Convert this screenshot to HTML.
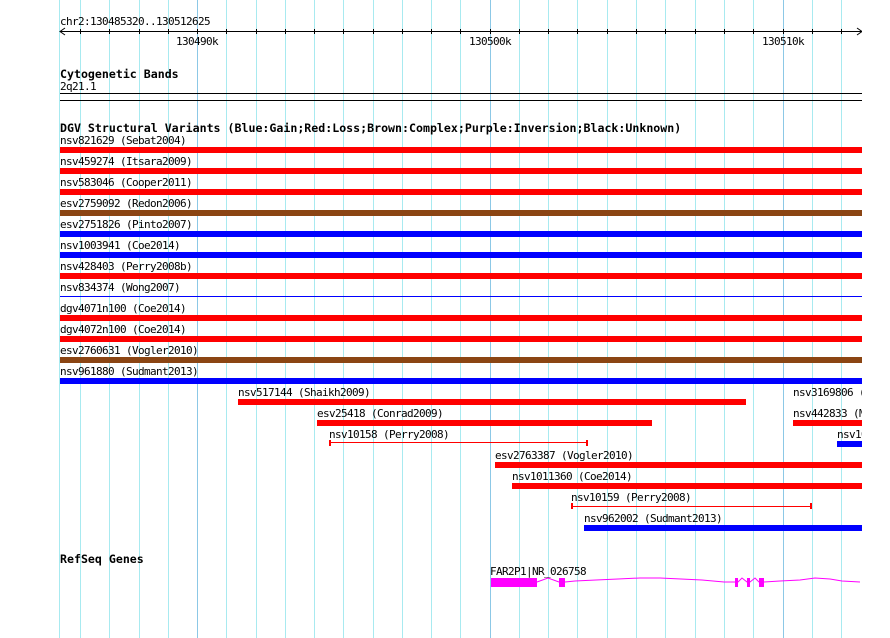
<!DOCTYPE html>
<html><head><style>
html,body{margin:0;padding:0;background:#fff;}
svg{display:block;}
text{font-family:"DejaVu Sans Mono","Liberation Mono",monospace;font-size:11px;letter-spacing:-0.62px;fill:#000;}
.b{font-weight:bold;font-size:11.6px;letter-spacing:0;}
</style></head><body>
<svg width="890" height="638" xmlns="http://www.w3.org/2000/svg">
<g stroke="#a8eaf0" stroke-width="1">
<line x1="59.5" y1="0" x2="59.5" y2="638"/>
<line x1="80.5" y1="0" x2="80.5" y2="638"/>
<line x1="109.5" y1="0" x2="109.5" y2="638"/>
<line x1="139.5" y1="0" x2="139.5" y2="638"/>
<line x1="168.5" y1="0" x2="168.5" y2="638"/>
<line x1="226.5" y1="0" x2="226.5" y2="638"/>
<line x1="256.5" y1="0" x2="256.5" y2="638"/>
<line x1="285.5" y1="0" x2="285.5" y2="638"/>
<line x1="314.5" y1="0" x2="314.5" y2="638"/>
<line x1="343.5" y1="0" x2="343.5" y2="638"/>
<line x1="373.5" y1="0" x2="373.5" y2="638"/>
<line x1="402.5" y1="0" x2="402.5" y2="638"/>
<line x1="431.5" y1="0" x2="431.5" y2="638"/>
<line x1="460.5" y1="0" x2="460.5" y2="638"/>
<line x1="519.5" y1="0" x2="519.5" y2="638"/>
<line x1="548.5" y1="0" x2="548.5" y2="638"/>
<line x1="577.5" y1="0" x2="577.5" y2="638"/>
<line x1="607.5" y1="0" x2="607.5" y2="638"/>
<line x1="636.5" y1="0" x2="636.5" y2="638"/>
<line x1="665.5" y1="0" x2="665.5" y2="638"/>
<line x1="695.5" y1="0" x2="695.5" y2="638"/>
<line x1="724.5" y1="0" x2="724.5" y2="638"/>
<line x1="753.5" y1="0" x2="753.5" y2="638"/>
<line x1="812.5" y1="0" x2="812.5" y2="638"/>
<line x1="841.5" y1="0" x2="841.5" y2="638"/>
</g>
<g stroke="#8cc8e6" stroke-width="1">
<line x1="197.5" y1="0" x2="197.5" y2="638"/>
<line x1="490.5" y1="0" x2="490.5" y2="638"/>
<line x1="783.5" y1="0" x2="783.5" y2="638"/>
</g>
<text x="60" y="25">chr2:130485320..130512625</text>
<g stroke="#000" stroke-width="1" fill="none">
<line x1="60" y1="31.5" x2="862" y2="31.5"/>
<polyline points="65,28 60,31.5 65,35"/>
<polyline points="857,28 862,31.5 857,35"/>
</g>
<g stroke="#000" stroke-width="1">
<line x1="80.5" y1="29" x2="80.5" y2="34"/><line x1="109.5" y1="29" x2="109.5" y2="34"/><line x1="139.5" y1="29" x2="139.5" y2="34"/><line x1="168.5" y1="29" x2="168.5" y2="34"/><line x1="197.5" y1="29" x2="197.5" y2="34"/><line x1="226.5" y1="29" x2="226.5" y2="34"/><line x1="256.5" y1="29" x2="256.5" y2="34"/><line x1="285.5" y1="29" x2="285.5" y2="34"/><line x1="314.5" y1="29" x2="314.5" y2="34"/><line x1="343.5" y1="29" x2="343.5" y2="34"/><line x1="373.5" y1="29" x2="373.5" y2="34"/><line x1="402.5" y1="29" x2="402.5" y2="34"/><line x1="431.5" y1="29" x2="431.5" y2="34"/><line x1="460.5" y1="29" x2="460.5" y2="34"/><line x1="490.5" y1="29" x2="490.5" y2="34"/><line x1="519.5" y1="29" x2="519.5" y2="34"/><line x1="548.5" y1="29" x2="548.5" y2="34"/><line x1="577.5" y1="29" x2="577.5" y2="34"/><line x1="607.5" y1="29" x2="607.5" y2="34"/><line x1="636.5" y1="29" x2="636.5" y2="34"/><line x1="665.5" y1="29" x2="665.5" y2="34"/><line x1="695.5" y1="29" x2="695.5" y2="34"/><line x1="724.5" y1="29" x2="724.5" y2="34"/><line x1="753.5" y1="29" x2="753.5" y2="34"/><line x1="783.5" y1="29" x2="783.5" y2="34"/><line x1="812.5" y1="29" x2="812.5" y2="34"/><line x1="841.5" y1="29" x2="841.5" y2="34"/>
</g>
<text x="176" y="45">130490k</text>
<text x="469" y="45">130500k</text>
<text x="762" y="45">130510k</text>
<text class="b" x="60" y="78">Cytogenetic Bands</text>
<text x="60" y="90">2q21.1</text>
<rect x="60" y="93" width="802" height="1" fill="#000"/>
<rect x="60" y="100" width="802" height="1" fill="#000"/>
<text class="b" x="60" y="132">DGV Structural Variants (Blue:Gain;Red:Loss;Brown:Complex;Purple:Inversion;Black:Unknown)</text>
<text x="60" y="144">nsv821629 (Sebat2004)</text><rect x="60" y="147" width="802" height="6" fill="#f00"/>
<text x="60" y="165">nsv459274 (Itsara2009)</text><rect x="60" y="168" width="802" height="6" fill="#f00"/>
<text x="60" y="186">nsv583046 (Cooper2011)</text><rect x="60" y="189" width="802" height="6" fill="#f00"/>
<text x="60" y="207">esv2759092 (Redon2006)</text><rect x="60" y="210" width="802" height="6" fill="#8b4513"/>
<text x="60" y="228">esv2751826 (Pinto2007)</text><rect x="60" y="231" width="802" height="6" fill="#00f"/>
<text x="60" y="249">nsv1003941 (Coe2014)</text><rect x="60" y="252" width="802" height="6" fill="#00f"/>
<text x="60" y="270">nsv428403 (Perry2008b)</text><rect x="60" y="273" width="802" height="6" fill="#f00"/>
<text x="60" y="291">nsv834374 (Wong2007)</text><rect x="60" y="296" width="802" height="1" fill="#00f"/>
<text x="60" y="312">dgv4071n100 (Coe2014)</text><rect x="60" y="315" width="802" height="6" fill="#f00"/>
<text x="60" y="333">dgv4072n100 (Coe2014)</text><rect x="60" y="336" width="802" height="6" fill="#f00"/>
<text x="60" y="354">esv2760631 (Vogler2010)</text><rect x="60" y="357" width="802" height="6" fill="#8b4513"/>
<text x="60" y="375">nsv961880 (Sudmant2013)</text><rect x="60" y="378" width="802" height="6" fill="#00f"/>
<text x="238" y="396">nsv517144 (Shaikh2009)</text><rect x="238" y="399" width="508" height="6" fill="#f00"/>
<text x="793" y="396">nsv3169806 (Fu2010)</text>
<text x="317" y="417">esv25418 (Conrad2009)</text><rect x="317" y="420" width="335" height="6" fill="#f00"/>
<text x="793" y="417">nsv442833 (McCarroll2008)</text><rect x="793" y="420" width="69" height="6" fill="#f00"/>
<text x="329" y="438">nsv10158 (Perry2008)</text>
<rect x="330" y="442" width="257" height="1" fill="#f00"/><rect x="329" y="440" width="2" height="6" fill="#f00"/><rect x="586" y="440" width="2" height="6" fill="#f00"/>
<text x="837" y="438">nsv1008911</text><rect x="837" y="441" width="25" height="6" fill="#00f"/>
<text x="495" y="459">esv2763387 (Vogler2010)</text><rect x="495" y="462" width="367" height="6" fill="#f00"/>
<text x="512" y="480">nsv1011360 (Coe2014)</text><rect x="512" y="483" width="350" height="6" fill="#f00"/>
<text x="571" y="501">nsv10159 (Perry2008)</text>
<rect x="572" y="506" width="239" height="1" fill="#f00"/><rect x="571" y="503" width="2" height="6" fill="#f00"/><rect x="810" y="503" width="2" height="6" fill="#f00"/>
<text x="584" y="522">nsv962002 (Sudmant2013)</text><rect x="584" y="525" width="278" height="6" fill="#00f"/>
<rect x="862" y="0" width="28" height="638" fill="#fff"/>
<text class="b" x="60" y="563">RefSeq Genes</text>
<text x="490" y="575">FAR2P1|NR_026758</text>
<g fill="#f0f">
<rect x="491" y="578" width="46" height="9"/>
<rect x="559" y="578" width="6" height="9"/>
<rect x="735" y="578" width="3" height="9"/>
<rect x="747" y="578" width="3" height="9"/>
<rect x="759" y="578" width="5" height="9"/>
</g>
<polyline fill="none" stroke="#f0f" stroke-width="1" points="537,582 548,578 559,582 565,582 575,581 596,580 618,579 640,578 660,578 681,579 702,580 724,582 735,582 738,582 742,578 747,582 750,582 755,578 759,582 764,582 780,581 800,580 815,578 830,579 842,581 860,582"/>
</svg>
</body></html>
